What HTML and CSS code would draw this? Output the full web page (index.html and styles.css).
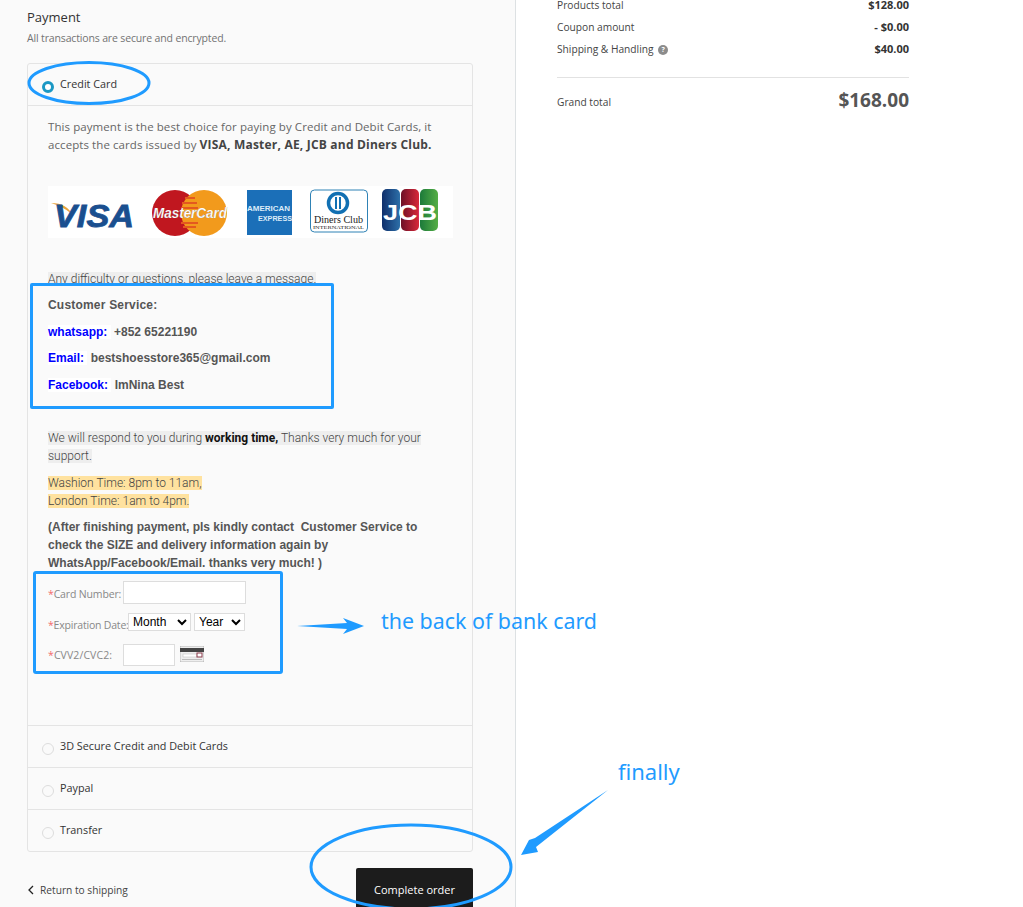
FILE: index.html
```html
<!DOCTYPE html>
<html lang="en">
<head>
<meta charset="utf-8">
<title>Payment</title>
<link rel="stylesheet" href="styles.css">
</head>
<body>
<div class="page">
  <main class="left">
    <h2 class="title">Payment</h2>
    <p class="subtitle">All transactions are secure and encrypted.</p>
    <section class="methods">
      <div class="method first-method"><span class="radio checked"></span><span>Credit Card</span></div>
      <div class="panel">
        <p class="intro">This payment is the best choice for paying by Credit and Debit Cards, it accepts the cards issued by <b>VISA, Master, AE, JCB and Diners Club.</b></p>
        <div class="logos">
          <svg width="405" height="52" viewBox="0 0 405 52" role="img" aria-label="Accepted cards">
            <defs>
              <linearGradient id="jb" x1="0" x2="1"><stop offset="0" stop-color="#0f2f6b"/><stop offset="1" stop-color="#2d6fa8"/></linearGradient>
              <linearGradient id="jr" x1="0" x2="1"><stop offset="0" stop-color="#6d1026"/><stop offset="1" stop-color="#d8283a"/></linearGradient>
              <linearGradient id="jg" x1="0" x2="1"><stop offset="0" stop-color="#1c7a3a"/><stop offset="1" stop-color="#55ae45"/></linearGradient>
            </defs>
            <rect width="405" height="52" fill="#fff"/>
            <path d="M3 17 C14 17 21 21 25 30 C20 24 13 20 3 17Z" fill="#e9a43c"/>
            <text x="6" y="41" class="visa" textLength="80" lengthAdjust="spacingAndGlyphs">VISA</text>
            <circle cx="127" cy="27" r="23" fill="#c0171f"/>
            <circle cx="156" cy="27" r="23" fill="#f29a1c"/>
            <path d="M137 12 H147 M134 17 H149 M133 22 H150 M133 37 H150 M135 41 H148" stroke="#e4591f" stroke-width="2"/>
            <text x="105" y="32" class="mc" textLength="74" lengthAdjust="spacingAndGlyphs">MasterCard</text>
            <rect x="199" y="4" width="45" height="45" fill="#1b6fb8"/>
            <text x="199" y="25" class="amex" textLength="43" lengthAdjust="spacingAndGlyphs">AMERICAN</text>
            <text x="210" y="35" class="amex" textLength="34" lengthAdjust="spacingAndGlyphs">EXPRESS</text>
            <rect x="262.500" y="4" width="57" height="42" rx="4" fill="#fff" stroke="#2f82b5"/>
            <circle cx="290" cy="17" r="9.500" fill="#fff" stroke="#1170b3" stroke-width="3.500"/>
            <path d="M288 11 V23 M292 11 V23" stroke="#1170b3" stroke-width="2"/>
            <text x="266" y="37" class="diners" textLength="49" lengthAdjust="spacingAndGlyphs">Diners Club</text>
            <text x="265" y="43" class="diners-small" textLength="51" lengthAdjust="spacingAndGlyphs">INTERNATIONAL</text>
            <rect x="334" y="3" width="18" height="42" rx="5" fill="url(#jb)"/>
            <rect x="353" y="3" width="18" height="42" rx="5" fill="url(#jr)"/>
            <rect x="372" y="3" width="18" height="42" rx="5" fill="url(#jg)"/>
            <text x="335" y="34" class="jcb" textLength="54" lengthAdjust="spacingAndGlyphs">JCB</text>
          </svg>
        </div>
        <p class="notice first"><span class="grey">Any difficulty or questions, please leave a message.</span></p>
        <div class="service">
          <p class="service-head">Customer Service:</p>
          <p class="service-line"><span class="tag">whatsapp:&nbsp;</span> +852 65221190</p>
          <p class="service-line"><span class="tag">Email:&nbsp;</span> bestshoesstore365@gmail.com</p>
          <p class="service-line"><span class="tag">Facebook:&nbsp;</span> ImNina Best</p>
        </div>
        <p class="notice respond"><span class="grey">We will respond to you during <b>working time,</b> Thanks very much for your support.</span></p>
        <p class="notice times"><span class="yellow">Washion Time: 8pm to 11am,</span><br><span class="yellow">London Time: 1am to 4pm.</span></p>
        <p class="after">(After finishing payment, pls kindly contact &nbsp;Customer Service to check the SIZE and delivery information again by WhatsApp/Facebook/Email. thanks very much! )</p>
        <div class="card-form">
          <div class="field field-number">
            <label class="label label-number"><i>*</i>Card Number:</label>
            <input class="input input-long" type="text" aria-label="Card Number">
          </div>
          <div class="field field-date">
            <label class="label label-date"><i>*</i>Expiration Date:</label>
            <select class="select select-month" aria-label="Month"><option>Month</option></select>
            <select class="select select-year" aria-label="Year"><option>Year</option></select>
          </div>
          <div class="field field-cvv">
            <label class="label"><i>*</i>CVV2/CVC2:</label>
            <input class="input input-short" type="text" aria-label="CVV2/CVC2">
            <svg class="cvv-icon" width="24" height="16" viewBox="0 0 24 16" aria-hidden="true">
              <rect width="24" height="16" fill="#eee" stroke="#888" stroke-width=".5"/>
              <rect y="2" width="24" height="4" fill="#444"/>
              <rect x="3" y="8" width="14" height="3" fill="#fff" stroke="#bbb" stroke-width=".5"/>
              <rect x="17" y="7" width="5" height="4" fill="#fff" stroke="#8a3a4a"/>
              <rect x="2" y="13" width="20" height="1" fill="#bbb"/>
            </svg>
          </div>
        </div>
      </div>
      <div class="method other"><span class="radio"></span><span>3D Secure Credit and Debit Cards</span></div>
      <div class="method other"><span class="radio"></span><span>Paypal</span></div>
      <div class="method other"><span class="radio"></span><span>Transfer</span></div>
    </section>
    <div class="actions">
      <a class="back"><svg width="8" height="10" viewBox="0 0 8 10" aria-hidden="true"><path d="M6 1 L2 5 L6 9" fill="none" stroke="#222" stroke-width="1.300"/></svg>Return to shipping</a>
      <button class="complete" type="button">Complete order</button>
    </div>
  </main>
  <aside class="right">
    <div class="row"><span>Products total</span><b>$128.00</b></div>
    <div class="row"><span>Coupon amount</span><b>- $0.00</b></div>
    <div class="row"><span>Shipping &amp; Handling <span class="help">?</span></span><b>$40.00</b></div>
    <div class="grand"><span>Grand total</span><b>$168.00</b></div>
  </aside>
  <svg class="marks" width="1023" height="907" viewBox="0 0 1023 907" aria-hidden="true">
    <ellipse cx="89" cy="83" rx="60" ry="20.500" class="ring"/>
    <ellipse cx="411" cy="867" rx="100" ry="42" class="ring"/>
    <path d="M297 626 L347 623 L343 618 L364 626 L343 634 L347 629 Z" class="arrow"/>
    <path d="M608 790 L535 838 L529 840 L521 855 L538 852 L536 847 Z" class="arrow"/>
  </svg>
  <span class="note note-back">the back of bank card</span>
  <span class="note note-final">finally</span>
</div>
</body>
</html>
```
FILE: styles.css
```css
* { box-sizing: border-box; }
html, body { margin: 0; padding: 0; height: 907px; overflow: hidden; background: #fff; }
body { font-family: "Open Sans", sans-serif; color: #333; }
p, h2 { margin: 0; }

.page { position: relative; display: flex; width: 1023px; height: 907px; overflow: hidden; }

.left { width: 516px; height: 907px; padding: 8px 42px 0 27px; background: #fafafa; border-right: 1px solid #dde1e3; }
.title { font-size: 13px; font-weight: 400; line-height: 18px; color: #333; }
.subtitle { margin-top: 4px; font-size: 10.500px; letter-spacing: -.15px; line-height: 16px; color: #737373; }

.methods { margin-top: 17px; width: 446px; border: 1px solid #e4e4e4; border-radius: 3px; }
.method { display: flex; align-items: flex-start; height: 42px; padding: 13px 14px 0; font-size: 10.800px; line-height: 14px; color: #333; gap: 6px; border-bottom: 1px solid #e4e4e4; }
.method.other:last-child { border-bottom: 0; height: 41px; }
.radio { width: 12px; height: 12px; margin-top: 4px; flex: none; border-radius: 50%; border: 1px solid #ddd; background: #fafafa; }
.radio.checked { border: 3px solid #1b98c4; background: #fff; }

.panel { height: 620px; padding: 12px 20px 0; border-bottom: 1px solid #e4e4e4; }
.intro { width: 392px; font-size: 11.500px; line-height: 18px; letter-spacing: .08px; color: #666; }
.intro b { color: #444; letter-spacing: .2px; font-size: 12px; }
.logos { margin-top: 32px; height: 52px; }
.logos svg { display: block; }
.visa { font: italic 700 31px "Liberation Sans", sans-serif; fill: #1a4f8f; stroke: #1a4f8f; stroke-width: .8px; }
.mc { font: italic 700 15px "Liberation Sans", sans-serif; fill: #fff; stroke: #777; stroke-width: .2px; }
.amex { font: 700 8px "Liberation Sans", sans-serif; fill: #dcecf8; }
.diners { font: 11px "Liberation Serif", serif; fill: #222; }
.diners-small { font: 5px "Liberation Serif", serif; fill: #222; }
.jcb { font: 700 22px "Liberation Sans", sans-serif; fill: #fff; }

.notice { font-family: Roboto, sans-serif; font-weight: 300; font-size: 12px; line-height: 18px; color: #444; }
.notice b { color: #111; font-weight: 700; }
.grey { background: #eee; }
.yellow { background: #ffe29f; }
.first { margin-top: 32px; }
.respond { margin-top: 20px; width: 390px; }
.times { margin-top: 9px; }

.service { position: relative; margin: -5px 0 0 -18px; width: 304px; height: 126px; padding: 10px 15px 0; background: #fafafa; border: 3px solid #1f9bff; border-radius: 2px; font: 700 12px/18px "Liberation Sans", sans-serif; color: #555; }
.service-head { letter-spacing: .2px; }
.service-line { margin-top: 8.500px; }
.tag { color: #00f; background: #fff; }

.after { margin-top: 8px; width: 385px; font: 700 12px/18px "Liberation Sans", sans-serif; color: #555; }

.card-form { margin: -1px 0 0 -15px; width: 250px; height: 103px; border: 3px solid #1f9bff; border-radius: 3px; padding: 7px 0 0 12px; }
.field { display: flex; align-items: center; font-size: 10.500px; }
.field-number { height: 23px; }
.field-date { margin-top: 9px; height: 18px; }
.field-cvv { margin-top: 13px; height: 22px; }
.label { color: #888; width: 75px; white-space: nowrap; padding-top: 3px; }
.label-number { letter-spacing: -.15px; }
.label-date { width: 80px; padding-top: 5px; letter-spacing: -.2px; }
.field-cvv .label { padding-top: 0; letter-spacing: .1px; }
.label i { font-style: normal; color: #f26b6b; }
.input { height: 100%; padding: 0; border: 1px solid #ddd; background: #fff; }
.input-long { width: 123px; }
.input-short { width: 52px; }
.select { height: 18px; padding: 0; margin-right: 3px; font: 12px "Liberation Sans", sans-serif; color: #000; background: #fff; border: 1px solid #ddd; }
.select-month { width: 63px; }
.select-year { width: 51px; }
.cvv-icon { margin-left: 5px; margin-top: -2px; }

.actions { display: flex; justify-content: space-between; margin-top: 16px; width: 446px; }
.back { display: flex; align-items: center; gap: 5px; height: 44px; font-size: 10.200px; color: #444; }
.complete { width: 117px; height: 44px; padding: 0 0 2px; border: 0; border-radius: 2px; background: #1c1c1c; color: #fff; font: 11px "Open Sans", sans-serif; }

.right { width: 393px; margin: -6px 0 0 41px; font-size: 10.200px; color: #444; }
.row { display: flex; justify-content: space-between; align-items: center; width: 352px; height: 22px; line-height: 22px; }
.row b { color: #333; font-size: 11px; }
.help { display: inline-block; width: 10px; height: 10px; margin-left: 2px; border-radius: 50%; background: #8c8c8c; color: #fff; font-size: 7px; font-weight: 700; line-height: 10px; text-align: center; vertical-align: middle; }
.grand { display: flex; justify-content: space-between; align-items: flex-start; width: 352px; margin-top: 17px; padding-top: 9px; border-top: 1px solid #e2e2e2; }
.grand span { padding-top: 8px; }
.grand b { font-size: 19px; line-height: 26px; color: #555; }

.marks { position: absolute; left: 0; top: 0; pointer-events: none; }
.ring { fill: none; stroke: #1f9bff; stroke-width: 3; }
.arrow { fill: #1f9bff; }
.note { position: absolute; color: #1f9bff; font-family: "Noto Sans", sans-serif; white-space: nowrap; }
.note-back { left: 381px; top: 606px; font-size: 21.400px; line-height: 30px; }
.note-final { left: 618px; top: 756px; font-size: 22px; line-height: 30px; }
```
